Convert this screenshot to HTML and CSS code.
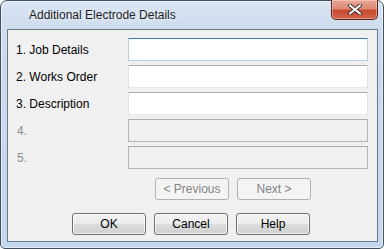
FILE: index.html
```html
<!DOCTYPE html>
<html>
<head>
<meta charset="utf-8">
<link rel="stylesheet" href="styles.css">
</head>
<body>
<div class="window">
  <div class="titlebar">
    <span class="title">Additional Electrode Details</span>
    <div class="close">
      <svg width="16" height="11" viewBox="0 0 16 11">
        <path d="M3 1.5 L13 9.5 M13 1.5 L3 9.5" stroke="#3a2a28" stroke-width="4" stroke-linecap="round"/>
        <path d="M3 1.5 L13 9.5 M13 1.5 L3 9.5" stroke="#ffffff" stroke-width="2.2" stroke-linecap="round"/>
      </svg>
    </div>
  </div>
  <div class="client">
    <div class="fields">
      <label class="lbl">1. Job Details</label><div class="input focus"></div>
      <label class="lbl">2. Works Order</label><div class="input"></div>
      <label class="lbl">3. Description</label><div class="input"></div>
      <label class="lbl dis">4.</label><div class="input disabled"></div>
      <label class="lbl dis">5.</label><div class="input disabled"></div>
    </div>
    <div class="nav">
      <div class="btn off">&lt; Previous</div>
      <div class="btn off">Next &gt;</div>
    </div>
    <div class="actions">
      <div class="btn">OK</div>
      <div class="btn">Cancel</div>
      <div class="btn">Help</div>
    </div>
  </div>
</div>
</body>
</html>
```

FILE: styles.css
```css
* { box-sizing: border-box; }
html, body { margin: 0; padding: 0; background: #ffffff; }
body { font-family: "Liberation Sans", Arial, sans-serif; font-size: 12px; color: #000; }

.window {
  width: 384px;
  height: 249px;
  border: 1px solid #434f5e;
  border-radius: 7px 7px 5px 5px;
  background: linear-gradient(180deg, #d9e5f3 0px, #cddcee 28px, #c4d7ed 100%);
  box-shadow: inset 0 0 0 1px rgba(255,255,255,0.55);
  padding: 0 5px 6px 6px;
  display: flex;
  flex-direction: column;
}

.titlebar {
  height: 28px;
  display: flex;
  align-items: flex-start;
  position: relative;
}
.title {
  margin-left: 22px;
  margin-top: 7px;
  font-size: 12px;
  color: #1e1e1e;
  text-shadow: 0 0 6px rgba(255,255,255,0.9);
}
.close {
  position: absolute;
  right: 0px;
  top: -1px;
  width: 47px;
  height: 20px;
  border: 1px solid #5a2418;
  border-top: none;
  border-radius: 0 0 5px 5px;
  background: linear-gradient(180deg, #e9a999 0%, #dc8a74 45%, #c84a30 55%, #d0654b 100%);
  box-shadow: inset 0 0 0 1px rgba(255,220,210,0.45);
  display: flex;
  align-items: center;
  justify-content: center;
}

.client {
  flex: 1;
  border: 1px solid #6a7888;
  background: #f0f0f0;
  display: flex;
  flex-direction: column;
  padding: 8px 9px 0 8px;
}

.fields {
  display: grid;
  grid-template-columns: 112px 240px;
  grid-auto-rows: 23px;
  row-gap: 4px;
  align-items: center;
}
.lbl { color: #000; padding-top: 1px; }
.lbl.dis { color: #8d8d8d; padding-left: 1px; }
.input {
  height: 23px;
  background: #ffffff;
  border: 1px solid #e2e3ea;
  border-top-color: #abadb3;
  border-bottom-color: #e3e9ef;
}
.input.focus {
  border-color: #b5cfe7;
  border-top-color: #3d7bad;
}
.input.disabled {
  background: #f0f0f0;
  border-color: #b5b5b5;
  border-top-color: #adadad;
}

.nav {
  display: flex;
  gap: 8px;
  margin-top: 9px;
  padding-left: 139px;
}
.actions {
  display: flex;
  gap: 8px;
  margin-top: 13px;
  padding-left: 56px;
}
.btn {
  width: 74px;
  height: 22px;
  border: 1px solid #707070;
  border-radius: 3px;
  background: linear-gradient(180deg, #f2f2f2 0%, #ebebeb 50%, #dddddd 51%, #cfcfcf 100%);
  box-shadow: inset 0 0 0 1px rgba(255,255,255,0.7);
  display: flex;
  align-items: center;
  justify-content: center;
  color: #000;
}
.btn.off {
  border-color: #adb2b5;
  background: #f4f4f4;
  box-shadow: none;
  color: #838383;
}
```
